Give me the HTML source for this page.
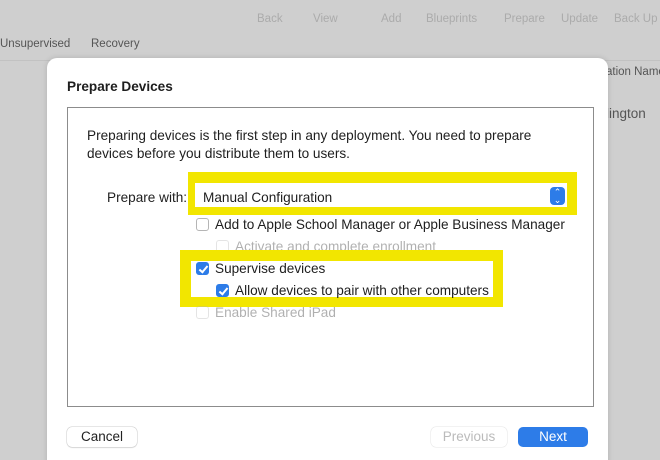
<!DOCTYPE html>
<html><head><style>
*{box-sizing:border-box;margin:0;padding:0}
html,body{width:660px;height:460px;overflow:hidden}
body{background:#cfcfcf;font-family:"Liberation Sans",sans-serif;position:relative;color:#222}
.a{position:absolute;white-space:nowrap}
.tb{color:#ababab;font-size:11.5px;top:13px}
.dlg{position:absolute;left:47px;top:58px;width:561px;height:420px;background:#fff;border-radius:10px;box-shadow:0 0 6px rgba(0,0,0,.15)}
.box{position:absolute;left:67px;top:107px;width:527px;height:300px;border:1px solid #8c8c8c}
.t{font-size:13.6px;color:#1e1e1e}
.cb{position:absolute;width:13px;height:13px;border:1px solid #b5b5b5;border-radius:3px;background:#fff}
.cb.on{background:#2d7ce8;border-color:#2d7ce8}
.cb.on::after{content:"";position:absolute;left:3.5px;top:1px;width:3px;height:7px;border:solid #fff;border-width:0 2px 2px 0;transform:rotate(40deg)}
.dis{opacity:.35}
.btn{position:absolute;height:20px;border-radius:5px;font-size:13.5px;text-align:center;line-height:20px;background:#fff;box-shadow:0 0 0 .5px #ccc,0 1px 1px rgba(0,0,0,.12)}
</style></head><body>
<div class="a tb" style="left:257px">Back</div>
<div class="a tb" style="left:313px">View</div>
<div class="a tb" style="left:381px">Add</div>
<div class="a tb" style="left:426px">Blueprints</div>
<div class="a tb" style="left:504px">Prepare</div>
<div class="a tb" style="left:561px">Update</div>
<div class="a tb" style="left:614px">Back Up</div>
<div class="a" style="left:0;top:38px;font-size:11.5px;color:#555">Unsupervised</div>
<div class="a" style="left:91px;top:38px;font-size:11.5px;color:#555">Recovery</div>
<div class="a" style="left:0;top:60px;width:660px;height:1px;background:#c2c2c2"></div>
<div class="a" style="left:606px;top:66px;font-size:11.5px;color:#555">ation Name</div>
<div class="a" style="left:606px;top:106px;font-size:13.5px;color:#555">lington</div>
<div class="dlg"></div>
<div class="a t" style="left:67px;top:79px;font-weight:bold">Prepare Devices</div>
<div class="box"></div>
<div class="a t" style="left:87px;top:127px;line-height:18px">Preparing devices is the first step in any deployment. You need to prepare<br>devices before you distribute them to users.</div>
<div class="a t" style="left:107px;top:190px">Prepare with:</div>
<div class="a" style="left:188px;top:172px;width:389px;height:43px;background:#f2e600"></div>
<div class="a" style="left:195px;top:183px;width:372px;height:24px;background:#fff"></div>
<div class="a t" style="left:203px;top:190px">Manual Configuration</div>
<div class="a" style="left:550px;top:187px;width:15px;height:18px;background:#2d7ce8;border-radius:4px;color:#fff;font-size:9px;line-height:8px;text-align:center;padding-top:1px">⌃<br>⌄</div>
<div class="cb" style="left:196px;top:218px"></div>
<div class="a t" style="left:215px;top:217px">Add to Apple School Manager or Apple Business Manager</div>
<div class="cb dis" style="left:216px;top:240px"></div>
<div class="a t dis" style="left:235px;top:239px">Activate and complete enrollment</div>
<div class="a" style="left:180px;top:250px;width:323px;height:57px;background:#f2e600"></div>
<div class="a" style="left:191px;top:261px;width:302px;height:36px;background:#fff"></div>
<div class="cb on" style="left:196px;top:262px"></div>
<div class="a t" style="left:215px;top:261px">Supervise devices</div>
<div class="cb on" style="left:216px;top:284px"></div>
<div class="a t" style="left:235px;top:283px">Allow devices to pair with other computers</div>
<div class="cb dis" style="left:196px;top:306px"></div>
<div class="a t dis" style="left:215px;top:305px">Enable Shared iPad</div>
<div class="btn" style="left:67px;top:427px;width:70px">Cancel</div>
<div class="btn" style="left:431px;top:427px;width:76px;color:#bbb;box-shadow:0 0 0 .5px #e6e6e6">Previous</div>
<div class="btn" style="left:518px;top:427px;width:70px;background:#2d7ce8;color:#fff;box-shadow:none">Next</div>
</body></html>
